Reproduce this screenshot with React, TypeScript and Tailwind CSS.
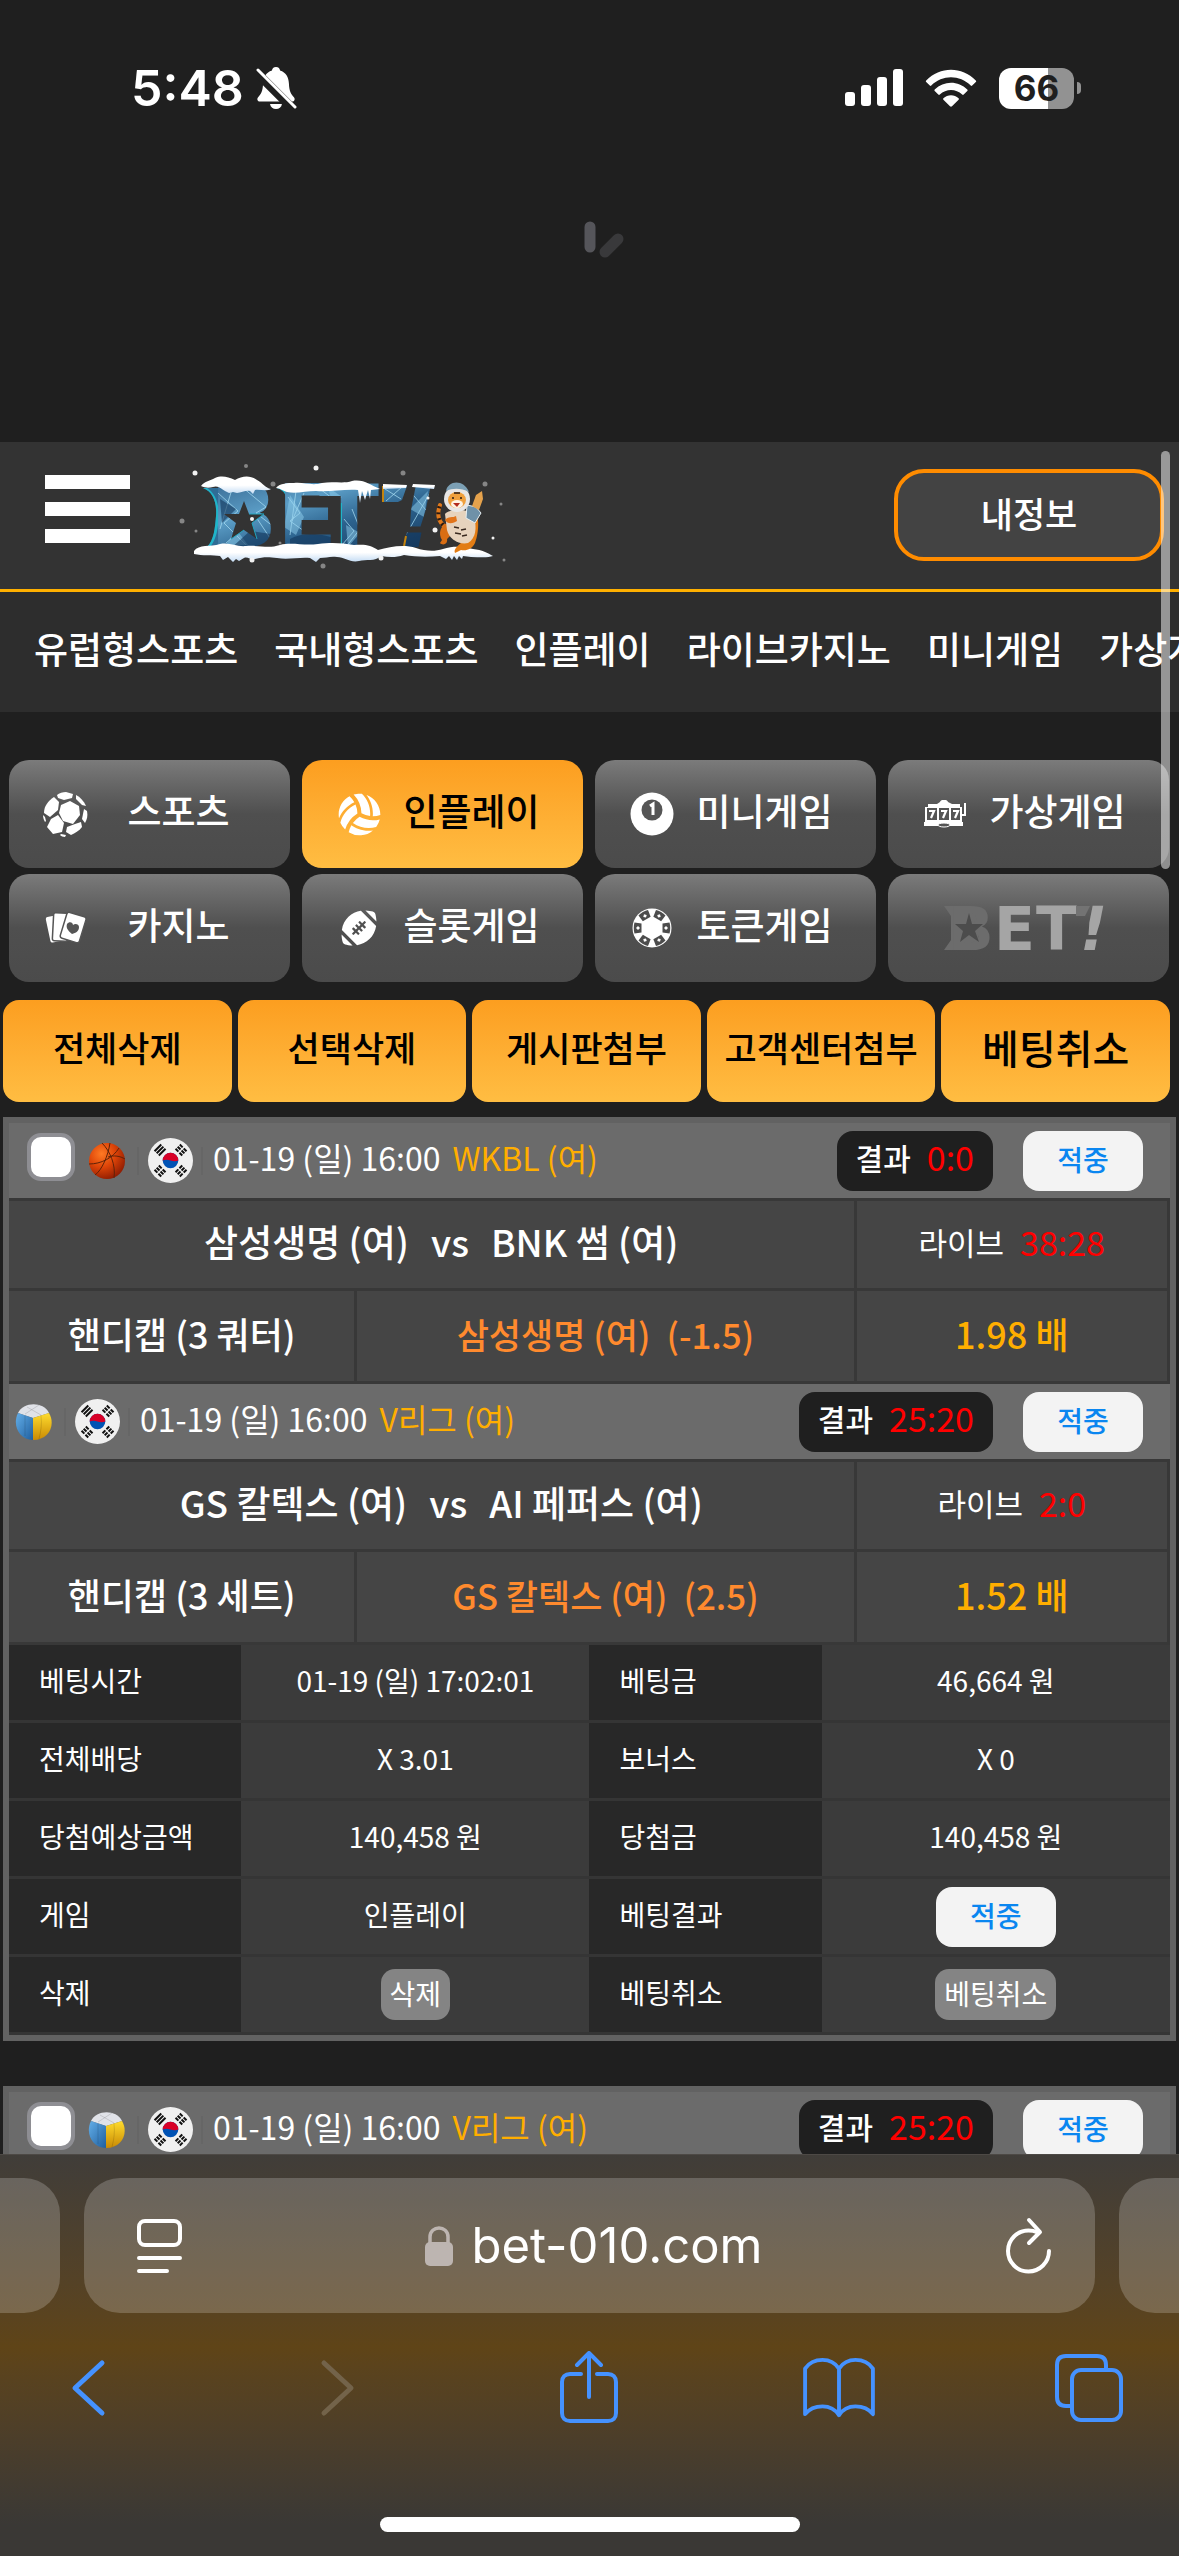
import type { ReactNode } from 'react';
import { FaFootballBall, FaVolleyballBall } from 'react-icons/fa';

const navItems = ['유럽형스포츠', '국내형스포츠', '인플레이', '라이브카지노', '미니게임', '가상게임'];

const actions = [
  { label: '전체삭제',     large: false },
  { label: '선택삭제',     large: false },
  { label: '게시판첨부',   large: false },
  { label: '고객센터첨부', large: false },
  { label: '베팅취소',     large: true  },
];

type Match = {
  ball: 'basketball' | 'volleyball';
  date: string;
  league: string;
  score: string;
  game?: { home: string; away: string; live: string; market: string; pick: string; line: string; rate: string };
};

const matches: Match[] = [
  {
    ball: 'basketball', date: '01-19 (일) 16:00', league: 'WKBL (여)', score: '0:0',
    game: { home: '삼성생명 (여)', away: 'BNK 썸 (여)', live: '38:28', market: '핸디캡 (3 쿼터)', pick: '삼성생명 (여)', line: '(-1.5)', rate: '1.98 배' },
  },
  {
    ball: 'volleyball', date: '01-19 (일) 16:00', league: 'V리그 (여)', score: '25:20',
    game: { home: 'GS 칼텍스 (여)', away: 'AI 페퍼스 (여)', live: '2:0', market: '핸디캡 (3 세트)', pick: 'GS 칼텍스 (여)', line: '(2.5)', rate: '1.52 배' },
  },
];

const nextMatch: Match = { ball: 'volleyball', date: '01-19 (일) 16:00', league: 'V리그 (여)', score: '25:20' };

/* ---------- status bar ---------- */

function StatusBar() {
  return (
    <div className="flex h-44 items-center justify-between pl-[131px] pr-[98px] text-white">
      <div className="flex items-center gap-[11px]">
        <span className="font-['Inter'] text-[50px] leading-none font-semibold">5:48</span>
        <svg width="42" height="44" viewBox="0 0 42 44" aria-hidden>
          <path d="M21 1c2.500 0 4 1.600 4 3.600 6 1.800 8.600 6.900 8.900 12.600.3 8 2 10.800 5 14 1.600 1.800.6 4.300-1.900 4.300H5c-2.500 0-3.500-2.500-1.900-4.300 3-3.200 4.700-6 5-14 .3-5.700 2.900-10.800 8.900-12.600C17 2.600 18.500 1 21 1z" fill="white" />
          <path d="M15 38h12c-.6 3.200-3 5-6 5s-5.400-1.800-6-5z" fill="white" />
          <path d="M0 5L37 42" stroke="#1f1f1f" strokeWidth="9" />
          <path d="M3 4L40 41" stroke="white" strokeWidth="3" strokeLinecap="round" />
        </svg>
      </div>
      <div className="flex items-center gap-[22px]">
        <svg width="58" height="38" viewBox="0 0 58 38" aria-hidden fill="white">
          <rect x="0" y="23" width="10" height="14" rx="3" />
          <rect x="16" y="16" width="10" height="21" rx="3" />
          <rect x="32" y="8" width="10" height="29" rx="3" />
          <rect x="48" y="0" width="10" height="37" rx="3" />
        </svg>
        <svg width="52" height="38" viewBox="0 0 52 38" aria-hidden fill="white">
          <path d="M1.200 11.500C15-2.800 37-2.800 50.800 11.500c.5.500.5 1 0 1.500l-3.600 3.600c-.5.500-1 .5-1.500 0-11-11-28.400-11-39.400 0-.5.500-1 .5-1.500 0L1.200 13c-.5-.5-.5-1 0-1.500z" />
          <path d="M9.700 20.400c9.200-9 23.400-9 32.600 0 .5.500.5 1 0 1.500l-3.600 3.600c-.5.500-1 .5-1.500 0-6.300-6-16.100-6-22.400 0-.5.500-1 .5-1.500 0l-3.600-3.600c-.5-.5-.5-1 0-1.500z" />
          <path d="M18.400 29.300c4.400-4 10.800-4 15.200 0 .5.500.5 1 0 1.500L27 37.200c-.6.600-1.400.6-2 0l-6.600-6.400c-.5-.5-.5-1 0-1.500z" />
        </svg>
        <div className="flex items-center gap-[3px]">
          <div className="flex h-[41px] w-[75px] items-center justify-center rounded-xl bg-linear-to-r from-white from-66% to-[#929292] to-66%">
            <span className="font-['Inter'] text-[35px] leading-none font-bold text-[#1f1f1f]">66</span>
          </div>
          <div className="h-3 w-1 rounded-r-full bg-[#929292]" />
        </div>
      </div>
    </div>
  );
}

function Spinner() {
  return (
    <svg className="mx-auto mt-[44px]" width="78" height="78" viewBox="0 0 78 78" aria-hidden>
      <path d="M39 7v20" stroke="#55555a" strokeWidth="11" strokeLinecap="round" />
      <path d="M54 32L67 19" stroke="#39393b" strokeWidth="11" strokeLinecap="round" />
    </svg>
  );
}

/* ---------- logos ---------- */

function SnowLogo() {
  return (
    <svg width="345" height="130" viewBox="0 0 345 130" role="img" aria-label="BET!">
      <defs>
        <linearGradient id="ice" x1="0" y1="0" x2="1" y2="1">
          <stop offset="0" stopColor="#34638c" />
          <stop offset=".35" stopColor="#5b9dc6" />
          <stop offset=".6" stopColor="#2c628d" />
          <stop offset="1" stopColor="#14375c" />
        </linearGradient>
        <linearGradient id="snow" x1="0" y1="0" x2="0" y2="1">
          <stop offset=".5" stopColor="#ffffff" />
          <stop offset="1" stopColor="#c4dcf4" />
        </linearGradient>
        <clipPath id="letters">
          <text x="40" y="88" fontSize="88" fontWeight="700" fontFamily="DejaVu Sans">B</text>
          <rect x="54" y="34" width="34" height="48" />
          <text x="107" y="88" fontSize="88" fontWeight="700" fontFamily="DejaVu Sans">E</text>
          <text x="149" y="88" fontSize="88" fontWeight="700" fontFamily="DejaVu Sans">T</text>
          <text x="228" y="88" fontSize="84" fontWeight="700" fontStyle="italic" fontFamily="DejaVu Sans">!</text>
          <path d="M213 27h24l-5 14-4 2h-15z" />
        </clipPath>
      </defs>
      <g aria-hidden>
        <path d="M33 29c10 4 14 14 13 28-1 12-2 24-9 31h16V29z" fill="#2f6c95" />
        <path d="M33 29c10 4 14 14 13 28-1 12-2 24-9 31h3c7-8 8-20 9-31 0-13-4-23-12-28z" fill="#20b4c8" />
        <path d="M107 29c9 3 11 10 10 22v37h9V29z" fill="#2f6c95" />
        <path d="M107 29c9 3 11 10 10 22v37h2V51c0-12-1-18-8-22z" fill="#20b4c8" />
      </g>
      <g clipPath="url(#letters)">
        <rect x="30" y="20" width="245" height="72" fill="url(#ice)" />
        <g stroke="#a8dcf2" strokeWidth="1" fill="none" opacity=".75">
          <path d="M48 34l20 18-14 12 22 22M62 30l-12 40M72 28l24 20-10 6 18 14M56 84l30-26 16 24M118 38l12 16-10 8 14 10M126 32l-6 44M134 34l-12 28M150 30l16 12-8 8M174 60l10 12-12 14M182 50l8 20-14 18M238 30l24 28M262 30l-26 46M215 30l16 10M232 28l-16 14" />
        </g>
        <g fill="#8fd0ee" opacity=".5">
          <path d="M120 36l14 22-8 18-12-8zM158 28l14 10-10 6zM66 70l12 16H56zM176 66l14 8-12 14zM240 50l18-18-4 26z" />
        </g>
        <g fill="#12355a" opacity=".6">
          <path d="M80 72l28 4v14H60zM120 80c14-8 34-6 50 2v8h-50zM50 40l16 10-14 14zM236 74l20-6v20h-20z" />
        </g>
        <path d="M171 44v45" stroke="#20b4c8" strokeWidth="2" />
      </g>
      <path d="M74 42l5 13h15l-12 9 5 16-13-9-13 9 5-16-12-9h15z" fill="#333333" />
      <path d="M79 55h15l-12 9 5 16M61 80l13-9" stroke="#22a6bf" strokeWidth="1" fill="none" />
      <path d="M213 27v16M236 77l-2 10" stroke="#c4830e" strokeWidth="2" />
      <g fill="url(#snow)">
        <path d="M31 27c4-5 9-5 14-8 7-3 13-1 20 2 7-4 15-5 22 0 6 3 8 8 14 9-5 3-11 0-16 1l-2 4-3-3c-4-1-9 2-13 2l-4-1-4 1-4-2c-3-2-7-6-12-4-4 1-8 1-12-1z" />
        <path d="M106 29c4-5 12-5 18-5 10-1 18 3 28 0 11-2 22 1 30-2 12-2 18 4 28 8l-9 1-1 9-2-9-3 10-3-9-2 12-2-13c-14-1-28 2-42 1-10 0-20 3-29 1-4-1-7-4-11-4z" />
        <path d="M213 25l24 1-1 3-23 1zM243 25l22 1-1 4-22-2z" />
        <path d="M24 92c5-7 16-4 26-7 10-2 16 3 26 2 14-1 22 3 34-1 12-3 24 1 38-1 14-2 24-1 36 1 11-1 17 0 24 5 12-3 25-6 38-2 9 3 18 4 27 1 12-4 22-2 30 0 9 1 15 4 20 7-5 2-14 1-22 1l-8-1-1 3-3-3-2 4-3-4-2 4-3-4-3 3-6-3c-12 1-24 1-36-1-9 3-16 2-23 1-6 6-15 3-22 5-9 2-14-4-22-4-7-1-11 1-17 1l-4 4-6-4c-11-1-22 2-33 0-9-1-14-1-22 1-4 2-7-3-11-1l-5 3-3-2-3 3-5-5-5 3-3-4c-7-1-18 0-26-2z" />
      </g>
      {/* mascot */}
      <g>
        <path d="M273 66c-5-5-6-12-3-20" stroke="#e0791c" strokeWidth="4" fill="none" strokeLinecap="round" />
        <path d="M273 66c-5-5-6-12-3-20" stroke="#2a1a12" strokeWidth="4" fill="none" strokeDasharray="2 4" />
        <path d="M304 52c6 4 5 22 1 32-3 6-8 8-14 7l-6 3c-2-4 4-8 8-12z" fill="#e27c14" />
        <path d="M278 64c-8 2-10 11-6 17l-2 3c3 3 8 1 7-4l6-6z" fill="#d96e14" />
        <path d="M275 55c4-5 25-6 29 2 3 12 2 22-6 27-9 2-19-4-21-13z" fill="#e7d3bd" />
        <path d="M297 46l9 2 5 6-6 10-9-5z" fill="#6f91a8" stroke="#e6eef2" strokeWidth="1" />
        <path d="M302 47l4-11 6-4 1 8-4 11z" fill="#e5a24c" />
        <circle cx="287" cy="40" r="13" fill="#e8e6e4" />
        <path d="M276 32c2-11 18-12 23 1-8-4-16-4-23-1z" fill="#7ca0b5" />
        <ellipse cx="287" cy="41" rx="9" ry="8" fill="#f0a03c" />
        <ellipse cx="287" cy="45" rx="6" ry="4" fill="#fff3e2" />
        <path d="M283 44h7l-3 4z" fill="#b32b1c" />
        <path d="M282 39h2M290 39h2M284 34h6" stroke="#2a1a12" strokeWidth="1.500" />
        <path d="M275 61c3-4 8-2 11-4l1 5c-3 2-9 4-12-1z" fill="#e2741a" />
        <path d="M284 68l5 1M285 74l6 1M296 70l-5 1M297 76l-5 1" stroke="#3a2a20" strokeWidth="1.500" />
      </g>
      <g fill="#f2f2f2">
        <circle cx="25" cy="14" r="2.500" /><circle cx="146" cy="9" r="2.500" /><circle cx="82" cy="60" r="2" />
        <circle cx="82" cy="101" r="2.500" /><circle cx="211" cy="99" r="2.500" /><circle cx="265" cy="71" r="2.500" />
        <circle cx="323" cy="79" r="1.500" /><circle cx="258" cy="39" r="1.500" />
      </g>
      <g fill="#868686">
        <circle cx="76" cy="7" r="2" /><circle cx="103" cy="25" r="2.500" /><circle cx="12" cy="62" r="2.500" />
        <circle cx="26" cy="72" r="1.500" /><circle cx="233" cy="14" r="2.500" /><circle cx="315" cy="25" r="2.500" />
        <circle cx="331" cy="45" r="1.500" /><circle cx="334" cy="101" r="1.500" /><circle cx="153" cy="107" r="2.500" />
        <circle cx="110" cy="84" r="1.500" />
      </g>
    </svg>
  );
}

function GhostLogo() {
  return (
    <svg width="174" height="88" viewBox="0 -20 174 88" role="img" aria-label="BET!">
      <path d="M2 2h14v44H2l7-10V12z" fill="#6c6c6c" />
      <rect x="14" y="8" width="22" height="34" fill="#6c6c6c" />
      <g fontSize="60" fontWeight="700" fontFamily="DejaVu Sans">
        <text x="6" y="46" fill="#6c6c6c">B</text>
        <text x="52" y="46" fill="#a5a5a5">E</text>
        <text x="94" y="46" fill="#a5a5a5">T</text>
        <text x="138" y="46" fill="#a5a5a5" fontStyle="italic">!</text>
      </g>
      <path d="M134 2h14l-5 10h-9z" fill="#737373" />
      <path d="M27 9l3 11h11l-8 7 4 11-10-7-9 7 3-11-8-7h11z" fill="#4c4c4c" />
    </svg>
  );
}

/* ---------- category icons ---------- */

function SoccerIcon() {
  return (
    <svg width="46" height="46" viewBox="0 0 46 46" aria-hidden fill="white">
      <path d="M18 14l9-4 9 5 1 9-7 9-10-3-4-8z" />
      <path d="M14 4c2-2 6-3 9-3l7 2-1 4-8 2-6-2z" />
      <path d="M11 6l5 5-1 8-8 7-6-4c0-7 4-12 10-16z" />
      <path d="M33 4c4 2 8 6 10 11l-4-1-6-6z" />
      <path d="M41 18l3 2c1 5 0 8-2 12l-3-4z" />
      <path d="M8 28l7-4 6 8-2 9-9 2-6-7z" />
      <path d="M24 36l8-3 6-2 1 5c-3 4-7 6-11 8l-5-3z" />
      <path d="M0 24l2 2 1 4-1 1c-1-2-2-4-2-7zM18 43l5 1-1 2c-2 0-4-1-5-2z" />
    </svg>
  );
}

function EightBallIcon() {
  return (
    <svg width="44" height="44" viewBox="0 0 44 44" aria-hidden>
      <circle cx="22" cy="22" r="21.500" fill="white" />
      <circle cx="22" cy="18" r="10.500" fill="#555" />
      <path d="M20 14l3-2v11" stroke="white" strokeWidth="3" fill="none" />
    </svg>
  );
}

function SlotIcon() {
  return (
    <svg width="42" height="28" viewBox="0 0 42 28" aria-hidden>
      <path d="M4 4h9l3-2c1-3 7-3 8 0l4 2h8v3H4z" fill="white" />
      <rect x="1" y="7" width="37" height="16" fill="white" />
      <path d="M0 22h39v4H0z" fill="white" />
      <path d="M3 8h10v12H3zM15 8h10v12H15zM27 8h9v12h-9z" fill="#555" />
      <path d="M5 11h5l-3 7M17 11h5l-3 7M29 11h5l-3 7" stroke="white" strokeWidth="2.200" fill="none" />
      <path d="M41 3v12h-3" stroke="white" strokeWidth="2" fill="none" />
      <ellipse cx="20" cy="25" rx="6" ry="2" fill="#555" stroke="white" />
    </svg>
  );
}

function CardsIcon() {
  return (
    <svg width="42" height="34" viewBox="0 0 42 34" aria-hidden>
      <rect x="3" y="5" width="13" height="26" rx="2" fill="white" transform="rotate(-12 9 18)" />
      <rect x="8" y="2" width="15" height="28" rx="2" fill="white" stroke="#555" strokeWidth="1.500" transform="rotate(3 15 16)" />
      <rect x="18" y="3" width="20" height="27" rx="2.500" fill="white" stroke="#555" strokeWidth="1.500" transform="rotate(17 28 17)" />
      <path d="M27 23c-5-4-6-7-5-10 2-3 6-2 6 1 2-2 6-1 6 2 0 4-3 6-7 7z" fill="#555" />
    </svg>
  );
}

function ChipIcon() {
  return (
    <svg width="40" height="44" viewBox="0 0 40 40" aria-hidden>
      <circle cx="20" cy="20" r="19.500" fill="white" />
      {[0, 60, 120, 180, 240, 300].map((deg) => (
        <g key={deg} transform={`rotate(${deg} 20 20)`}>
          <path d="M2.500 14.500l7 1v9l-7 1c-1-3-1-8 0-11z" fill="#4c4c4c" />
          <path d="M6 18l2 2-2 2-2-2z" fill="white" />
        </g>
      ))}
    </svg>
  );
}

const categories: { label: string; icon: ReactNode; active?: boolean }[] = [
  { label: '스포츠',   icon: <SoccerIcon /> },
  { label: '인플레이', icon: <FaVolleyballBall size={43} />, active: true },
  { label: '미니게임', icon: <EightBallIcon /> },
  { label: '가상게임', icon: <SlotIcon /> },
  { label: '카지노',   icon: <CardsIcon /> },
  { label: '슬롯게임', icon: <FaFootballBall size={36} /> },
  { label: '토큰게임', icon: <ChipIcon /> },
];

/* ---------- ticket ---------- */

function Basketball() {
  return (
    <svg width="38" height="38" viewBox="0 0 38 38" aria-hidden>
      <defs>
        <radialGradient id="hoop" cx=".35" cy=".3" r=".75">
          <stop offset="0" stopColor="#ff7a24" />
          <stop offset=".5" stopColor="#dd4408" />
          <stop offset="1" stopColor="#8e1c02" />
        </radialGradient>
      </defs>
      <circle cx="19" cy="19" r="18" fill="url(#hoop)" />
      <path d="M1 22c12 0 24-6 30-16M14 1c8 8 14 22 12 35M22 1C20 14 14 28 7 33M20 15c6-2 12-1 17 2" stroke="#5e2208" strokeWidth="1" fill="none" />
    </svg>
  );
}

function Volleyball() {
  return (
    <svg width="38" height="38" viewBox="0 0 38 38" aria-hidden>
      <defs>
        <linearGradient id="vblue" x1="0" y1="0" x2="1" y2="1">
          <stop offset="0" stopColor="#63aee8" />
          <stop offset="1" stopColor="#1f5f9f" />
        </linearGradient>
        <linearGradient id="vyellow" x1="0" y1="0" x2="0" y2="1">
          <stop offset="0" stopColor="#ffdc2e" />
          <stop offset="1" stopColor="#c98a04" />
        </linearGradient>
      </defs>
      <path d="M3 10C8-1 28-2 34 10L18 15z" fill="#e0e2e8" />
      <path d="M3 10l15 5v22C4 37-3 22 3 10z" fill="url(#vblue)" />
      <path d="M34 10c7 12 0 27-16 27V15z" fill="url(#vyellow)" />
      <path d="M10 13v20M26 13c1 8 0 15-2 23M12 4l14 8M24 2L10 11" stroke="#00000020" strokeWidth="1" fill="none" />
    </svg>
  );
}

function KoreaFlag() {
  const bars = (rotation: string, broken: boolean) => (
    <g transform={rotation} stroke="#111" strokeWidth="2" strokeDasharray={broken ? '4 1.500' : undefined}>
      <path d="M-4.700-3h9.500M-4.700 0h9.500M-4.700 3h9.500" />
    </g>
  );
  return (
    <svg width="45" height="45" viewBox="0 0 45 45" role="img" aria-label="대한민국">
      <circle cx="22.500" cy="22.500" r="22.500" fill="#f0f0f0" />
      <circle cx="22.500" cy="22.500" r="7.800" fill="#0052b4" />
      <path d="M14.700 22.500a7.800 7.800 0 0 1 15.600 0c-2 1-5 1-7.800 0s-5.500-1-7.800 0z" fill="#d80027" />
      {bars('translate(12 12) rotate(-45)', false)}
      {bars('translate(33 12) rotate(45)', true)}
      {bars('translate(12 33) rotate(45)', true)}
      {bars('translate(33 33) rotate(-45)', true)}
    </svg>
  );
}

function HitButton() {
  return (
    <button className="h-[60px] w-[120px] rounded-2xl bg-[#f3f3f3] pb-1 text-[28px] leading-none font-medium text-[#0a86f0]">
      적중
    </button>
  );
}

function MatchHeader({ match, selectable }: { match: Match; selectable?: boolean }) {
  return (
    <div className="flex h-[78px] items-center border-b-[3px] border-[#383838] bg-[#6b6b6b] pl-[6px] pr-[27px]">
      {selectable && (
        <input
          type="checkbox"
          aria-label="베팅 선택"
          className="mr-[13px] mb-2 ml-3 size-12 appearance-none rounded-[14px] border-4 border-[#8e8e93] bg-white"
        />
      )}
      {match.ball === 'basketball' ? <Basketball /> : <Volleyball />}
      <div className="ml-[11px] h-7 w-[2px] bg-[#666666]" />
      <div className="ml-[9px]">
        <KoreaFlag />
      </div>
      <div className="ml-[8px] h-7 w-[2px] bg-[#666666]" />
      <div className="mb-2 ml-[10px] flex items-center gap-3 text-[32px] leading-none whitespace-nowrap">
        <span>{match.date}</span>
        <span className="text-[#ffae00]">{match.league}</span>
      </div>
      <div className="ml-auto flex items-center gap-[30px]">
        <div className="flex h-[60px] items-center gap-4 rounded-2xl bg-[#1f1f1f] px-[19px] pb-2 leading-none">
          <span className="text-[30px] font-medium">결과</span>
          <span className="text-[34px] text-[#ff0000]">{match.score}</span>
        </div>
        <HitButton />
      </div>
    </div>
  );
}

function MatchBody({ game }: { game: NonNullable<Match['game']> }) {
  return (
    <div className="bg-[#454545] leading-none whitespace-nowrap">
      <div className="flex h-[90px] border-b-[3px] border-[#383838]">
        <div className="flex w-[73%] items-center justify-center gap-[22px] border-r-[3px] border-[#383838] pb-[6px] pl-5 text-[37px] font-medium">
          <span>{game.home}</span>
          <span>vs</span>
          <span>{game.away}</span>
        </div>
        <div className="flex flex-1 items-center justify-center gap-4 border-r-[3px] border-[#383838] pb-[6px] text-[31px]">
          <span>라이브</span>
          <span className="text-[34px] text-[#ff0000]">{game.live}</span>
        </div>
      </div>
      <div className="flex h-[93px] border-b-[3px] border-[#383838] text-[36px] font-medium">
        <div className="flex w-[30%] items-center justify-center border-r-[3px] border-[#383838] pb-[6px]">
          {game.market}
        </div>
        <div className="flex w-[43%] items-center justify-center gap-4 border-r-[3px] border-[#383838] pb-[6px] text-[35px] text-[#ff8a2e]">
          <span>{game.pick}</span>
          <span>{game.line}</span>
        </div>
        <div className="flex flex-1 items-center justify-center border-r-[3px] border-[#383838] pb-[6px] text-[#ffae00]">
          {game.rate}
        </div>
      </div>
    </div>
  );
}

function SmallButton({ label }: { label: string }) {
  return (
    <button className="h-[51px] rounded-[14px] bg-[#848484] px-[9px] pb-1 text-[28px] leading-none">{label}</button>
  );
}

const details: [string, ReactNode, string, ReactNode][] = [
  ['베팅시간',     '01-19 (일) 17:02:01', '베팅금',   '46,664 원'],
  ['전체배당',     'X 3.01',              '보너스',   'X 0'],
  ['당첨예상금액', '140,458 원',          '당첨금',   '140,458 원'],
  ['게임',         '인플레이',            '베팅결과', <HitButton />],
  ['삭제',         <SmallButton label="삭제" />, '베팅취소', <SmallButton label="베팅취소" />],
];

function DetailValue({ children }: { children: ReactNode }) {
  return (
    <td className="h-[78px] w-[30%] border-b-[3px] border-[#353535] bg-[#3b3b3b] p-0">
      <div className={`flex justify-center ${typeof children === 'string' ? 'pb-[5px]' : ''}`}>{children}</div>
    </td>
  );
}

function DetailTable() {
  const label = 'h-[78px] w-1/5 border-b-[3px] border-[#353535] bg-[#282828] p-0 pb-[5px] pl-[30px] text-left font-normal';
  return (
    <table className="w-full table-fixed border-separate border-spacing-0 text-[28px] leading-none whitespace-nowrap">
      <tbody>
        {details.map(([l1, v1, l2, v2]) => (
          <tr key={l1}>
            <th scope="row" className={label}>{l1}</th>
            <DetailValue>{v1}</DetailValue>
            <th scope="row" className={label}>{l2}</th>
            <DetailValue>{v2}</DetailValue>
          </tr>
        ))}
      </tbody>
    </table>
  );
}

/* ---------- browser chrome ---------- */

function BrowserBar() {
  const tool = 'flex w-[76px] justify-center';
  return (
    <footer className="flex h-[402px] shrink-0 flex-col border-t border-[#4d4945] bg-linear-to-b from-[#403d39] from-0% via-[#5f4417] via-48% to-[#3a3835] to-92%">
      <div className="mt-[23px] flex h-[135px] gap-6">
        <div className="w-[60px] rounded-r-[36px] bg-white/20" />
        <div className="flex flex-1 items-center justify-between rounded-[36px] bg-white/20 pr-[42px] pl-[51px]">
          <button aria-label="페이지 메뉴">
            <svg width="48" height="56" viewBox="0 0 48 56" fill="none" stroke="white" strokeWidth="4" strokeLinecap="round" aria-hidden>
              <rect x="4" y="3" width="41" height="24" rx="6" />
              <path d="M4 40h41M4 53h28" />
            </svg>
          </button>
          <div className="flex items-center gap-[18px]">
            <svg width="28" height="40" viewBox="0 0 28 40" aria-hidden>
              <rect x="0" y="16" width="28" height="24" rx="5" fill="#bdb5b1" />
              <path d="M5 18v-7C5 -1 23 -1 23 11v7" fill="none" stroke="#bdb5b1" strokeWidth="3.500" />
            </svg>
            <span className="font-['Inter'] text-[49px] leading-none text-white">bet-010.com</span>
          </div>
          <button aria-label="새로고침">
            <svg width="48" height="58" viewBox="0 0 48 58" fill="none" stroke="white" strokeWidth="4" strokeLinecap="round" strokeLinejoin="round" aria-hidden>
              <path d="M44 34a20.500 20.500 0 1 1-20.500-20.500c3 0 6 .5 8 1.500" />
              <path d="M24 3l11 12-11 11" />
            </svg>
          </button>
        </div>
        <div className="w-[60px] rounded-l-[36px] bg-white/20" />
      </div>
      <nav className="flex h-[150px] items-center justify-between pr-[52px] pl-[50px] text-[#4592ff]">
        <button aria-label="뒤로" className={tool}>
          <svg width="36" height="58" viewBox="0 0 36 58" fill="none" stroke="currentColor" strokeWidth="5" strokeLinecap="round" strokeLinejoin="round" aria-hidden>
            <path d="M32 4L5 29l27 25" />
          </svg>
        </button>
        <button aria-label="앞으로" className="flex w-[76px] justify-center text-[#73634a]">
          <svg width="36" height="58" viewBox="0 0 36 58" fill="none" stroke="currentColor" strokeWidth="5" strokeLinecap="round" strokeLinejoin="round" aria-hidden>
            <path d="M4 4l27 25L4 54" />
          </svg>
        </button>
        <button aria-label="공유" className={tool}>
          <svg width="60" height="74" viewBox="0 0 60 74" fill="none" stroke="currentColor" strokeWidth="4" strokeLinecap="round" strokeLinejoin="round" aria-hidden>
            <path d="M22 23H11c-5 0-8 3-8 8v31c0 5 3 8 8 8h38c5 0 8-3 8-8V31c0-5-3-8-8-8H38" />
            <path d="M30 46V3M18 14L30 2l12 12" />
          </svg>
        </button>
        <button aria-label="책갈피" className={tool}>
          <svg width="74" height="62" viewBox="0 0 76 64" fill="none" stroke="currentColor" strokeWidth="4" strokeLinejoin="round" strokeLinecap="round" aria-hidden>
            <path d="M38 12C34 6 28 3 21 3S7 6 3 12v47c4-5 11-8 18-8s13 3 17 9c4-6 10-9 17-9s14 3 18 8V12C69 6 62 3 55 3S42 6 38 12v48" />
          </svg>
        </button>
        <button aria-label="탭" className={tool}>
          <svg width="70" height="70" viewBox="0 0 70 70" fill="none" stroke="currentColor" strokeWidth="4" strokeLinejoin="round" aria-hidden>
            <rect x="18" y="17" width="49" height="50" rx="9" />
            <path d="M17 53h-5c-6 0-9-3-9-9V12c0-6 3-9 9-9h31c6 0 9 3 9 9v4" />
          </svg>
        </button>
      </nav>
      <div className="mx-auto mt-[54px] h-[15px] w-[420px] rounded-full bg-white" />
    </footer>
  );
}

export default function App() {
  return (
    <div className="flex h-screen flex-col overflow-hidden bg-[#1f1f1f] font-['Noto_Sans_CJK_KR',sans-serif] text-white">
      <div className="h-[442px] shrink-0">
        <StatusBar />
        <Spinner />
      </div>

      <main className="relative min-h-0 flex-1 overflow-hidden">
        <header className="flex h-[150px] items-start justify-between border-b-[3px] border-[#ffb000] bg-[#333333] pr-[15px] pl-[45px]">
          <div className="flex items-start gap-10">
            <button aria-label="전체 메뉴" className="mt-[33px] flex flex-col gap-[13px]">
              <span className="h-[14px] w-[85px] bg-white" />
              <span className="h-[14px] w-[85px] bg-white" />
              <span className="h-[14px] w-[85px] bg-white" />
            </button>
            <a href="#" className="mt-[17px]">
              <SnowLogo />
            </a>
          </div>
          <button className="mt-[27px] h-[92px] w-[270px] rounded-[30px] border-4 border-[#ff8c00] bg-[#434343] pb-[6px] text-[35px] leading-none font-medium">
            내정보
          </button>
        </header>

        <nav className="flex h-[120px] items-center gap-9 overflow-hidden bg-[#2d2d2d] pb-2 pl-[34px] text-[37px] leading-none font-medium">
          {navItems.map((item) => (
            <a key={item} href="#" className="shrink-0">{item}</a>
          ))}
        </nav>

        <div className="mt-12 grid grid-cols-4 gap-x-3 gap-y-[6px] pr-[10px] pl-[9px]">
          {categories.map((c) => (
            <button
              key={c.label}
              className={`flex h-[108px] items-center rounded-[20px] pr-[22px] pl-[34px] text-[37px] leading-none font-medium whitespace-nowrap ${
                c.active
                  ? 'bg-linear-to-b from-[#fc9e1f] to-[#ffbd42] text-black'
                  : 'bg-linear-to-b from-[#7b7b7b] via-[#4f4f4f] to-[#4b4b4b]'
              }`}
            >
              <span className="flex w-[46px] justify-center text-white">{c.icon}</span>
              <span className="mb-2 flex-1 text-center">{c.label}</span>
            </button>
          ))}
          <button className="flex h-[108px] items-center justify-center rounded-[20px] bg-linear-to-b from-[#7b7b7b] via-[#4f4f4f] to-[#4b4b4b]">
            <GhostLogo />
          </button>
        </div>

        <div className="mt-[18px] grid grid-cols-5 gap-[6px] pr-[9px] pl-[3px] text-black">
          {actions.map((a) => (
            <button
              key={a.label}
              className={`h-[102px] rounded-2xl bg-linear-to-b from-[#fc9e1f] to-[#ffbd42] pb-2 font-medium whitespace-nowrap ${
                a.large ? 'text-[40px]' : 'text-[35px]'
              }`}
            >
              {a.label}
            </button>
          ))}
        </div>

        <section className="mx-[3px] mt-[15px] border-[6px] border-[#626262]">
          {matches.map((m, i) => (
            <div key={m.league}>
              <MatchHeader match={m} selectable={i === 0} />
              {m.game && <MatchBody game={m.game} />}
            </div>
          ))}
          <DetailTable />
        </section>

        <section className="mx-[3px] mt-[45px] border-[6px] border-[#626262]">
          <MatchHeader match={nextMatch} selectable />
        </section>

        {/* scroll indicator */}
        <div className="absolute top-[9px] right-[9px] h-[418px] w-[9px] rounded-full bg-white/50" />
      </main>

      <BrowserBar />
    </div>
  );
}
